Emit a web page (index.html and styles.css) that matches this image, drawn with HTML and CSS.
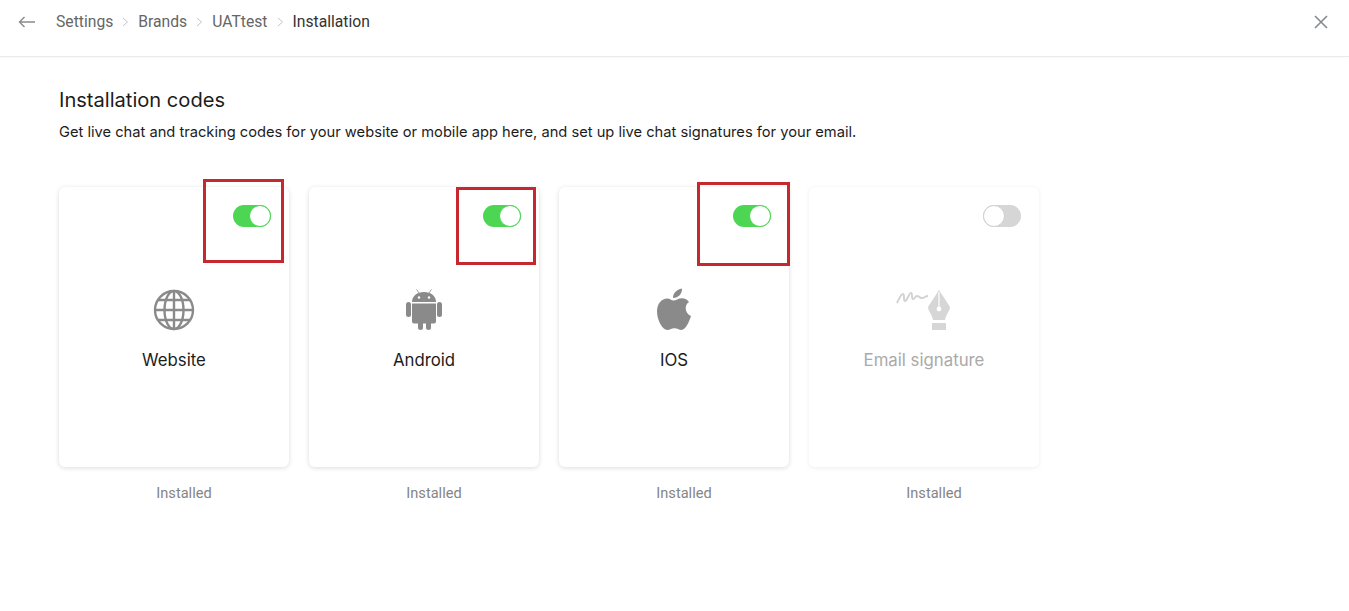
FILE: index.html
```html
<!DOCTYPE html>
<html lang="en">
<head>
    <meta charset="UTF-8">
    <title>Installation</title>
    <link rel="stylesheet" href="styles.css">
</head>
<body>
    <div class="topbar">
        <svg class="back" width="18" height="12" viewBox="0 0 18 12"><path d="M17 6H1.500M6.500 1L1.500 6l5 5" fill="none" stroke="#8a8a8a" stroke-width="1.400"/></svg>
        <div class="crumbs">
            <span>Settings</span>
            <svg class="sep" width="7" height="10" viewBox="0 0 7 10"><path d="M1 1l4.500 4L1 9" fill="none" stroke="#c4c4c4" stroke-width="1"/></svg>
            <span>Brands</span>
            <svg class="sep" width="7" height="10" viewBox="0 0 7 10"><path d="M1 1l4.500 4L1 9" fill="none" stroke="#c4c4c4" stroke-width="1"/></svg>
            <span>UATtest</span>
            <svg class="sep" width="7" height="10" viewBox="0 0 7 10"><path d="M1 1l4.500 4L1 9" fill="none" stroke="#c4c4c4" stroke-width="1"/></svg>
            <span class="current">Installation</span>
        </div>
        <svg class="close" width="14" height="14" viewBox="0 0 14 14"><path d="M1 1l12 12M13 1L1 13" fill="none" stroke="#858a8c" stroke-width="1.600"/></svg>
    </div>

    <div class="content">
        <h1>Installation codes</h1>
        <p class="intro">Get live chat and tracking codes for your website or mobile app here, and set up live chat signatures for your email.</p>

        <div class="platforms">
            <div class="platform">
                <div class="card">
                    <div class="card-top"><span class="toggle on"></span></div>
                    <svg class="icon" width="44" height="44" viewBox="0 0 44 44">
                        <g fill="none" stroke="#8a8a8a" stroke-width="2.400">
                            <circle cx="22" cy="22" r="19"/>
                            <ellipse cx="22" cy="22" rx="9.500" ry="19"/>
                            <path d="M22 3v38M3 22h38M6 12h32M6 32h32"/>
                        </g>
                    </svg>
                    <div class="name">Website</div>
                </div>
                <div class="status">Installed</div>
            </div>

            <div class="platform">
                <div class="card">
                    <div class="card-top"><span class="toggle on"></span></div>
                    <svg class="icon" width="44" height="44" viewBox="0 0 44 44">
                        <g fill="#8a8a8a">
                            <path d="M10 14c0-6 5-10 12-10s12 4 12 10z"/>
                            <path d="M10 15.500h24v18a2 2 0 0 1-2 2H12a2 2 0 0 1-2-2z"/>
                            <rect x="16" y="32" width="5" height="10" rx="2.500"/>
                            <rect x="24" y="32" width="5" height="10" rx="2.500"/>
                            <rect x="4" y="14" width="5" height="15" rx="2.500"/>
                            <rect x="35" y="14" width="5" height="15" rx="2.500"/>
                        </g>
                        <path d="M14.500 1.500l3 4M29.500 1.500l-3 4" stroke="#a0a0a0" stroke-width="1" fill="none"/>
                        <circle cx="17" cy="9.500" r="1.200" fill="#fff"/>
                        <circle cx="27" cy="9.500" r="1.200" fill="#fff"/>
                    </svg>
                    <div class="name">Android</div>
                </div>
                <div class="status">Installed</div>
            </div>

            <div class="platform">
                <div class="card">
                    <div class="card-top"><span class="toggle on"></span></div>
                    <svg class="icon" width="44" height="44" viewBox="0 0 44 44">
                        <g fill="#8a8a8a">
                            <path d="M21.500 12.500c2.500 0 4.500-2.300 8.500-2.300 3 0 5.500 1.400 7 3.700-4.800 3-4.500 11 2 14-1.500 5-5.500 14-9.500 14-3 0-4-1.700-7-1.700s-4.500 1.700-7 1.700C10 41.900 5 31.500 5 23.500c0-8 5-13 10-13 3 0 4.500 2 6.500 2z"/>
                            <path d="M21 10c-.2-4.500 3.500-8.500 9-9.500.3 5-3.500 9.500-9 9.500z"/>
                        </g>
                    </svg>
                    <div class="name">IOS</div>
                </div>
                <div class="status">Installed</div>
            </div>

            <div class="platform disabled">
                <div class="card">
                    <div class="card-top"><span class="toggle"></span></div>
                    <svg class="icon" width="56" height="44" viewBox="0 0 56 44">
                        <path d="M1 15c2-4 4-9 6-9s0 7 2 7 4-8 6-8 0 6 2 6 2-3 4-3 4 3 6 2 3-2 5-2" fill="none" stroke="#d2d2d2" stroke-width="1.900"/>
                        <path d="M43 2l11 17c0 4-4 7-5 13H37c-1-6-5-9-5-13z" fill="#d6d6d6"/>
                        <rect x="36" y="35" width="14" height="7" fill="#d6d6d6"/>
                        <path d="M43 4v15" stroke="#fff" stroke-width="1.200"/>
                        <circle cx="43" cy="21" r="2.400" fill="#fff"/>
                    </svg>
                    <div class="name">Email signature</div>
                </div>
                <div class="status">Installed</div>
            </div>
        </div>
    </div>

    <!-- red boxes drawn over the screenshot -->
    <div class="mark mark-a"></div>
    <div class="mark mark-b"></div>
    <div class="mark mark-c"></div>
</body>
</html>
```

FILE: styles.css
```css
html, body {
    margin: 0;
    padding: 0;
    background: #fff;
}

body {
    font-family: Inter, "Open Sans", sans-serif;
    color: #1c1c1c;
    height: 611px;
    overflow: hidden;
    position: relative;
}

.topbar {
    display: flex;
    align-items: center;
    height: 57px;
    box-sizing: border-box;
    padding: 0 21px 13px 18px;
    border-bottom: 1px solid #ebebeb;
    box-shadow: 0 1px 2px rgba(0, 0, 0, 0.03);
    font-family: Roboto, sans-serif;
    font-size: 15.700px;
    color: #666;
}

.back {
    margin-right: 20px;
}

.crumbs {
    display: flex;
    align-items: center;
    gap: 9px;
}

.current {
    color: #333;
}

.close {
    margin-left: auto;
}

.content {
    padding: 32px 59px 0;
}

h1 {
    margin: 0;
    font-size: 20.100px;
    font-weight: 400;
    line-height: 22px;
}

.intro {
    margin: 10px 0 0;
    font-size: 14.680px;
    line-height: 22px;
}

.platforms {
    display: flex;
    margin-top: 44px;
}

.platform {
    width: 250px;
}

.card {
    width: 230px;
    height: 280px;
    box-sizing: border-box;
    padding: 18px 18px 0;
    border-radius: 6px;
    background: #fff;
    box-shadow: 0 1px 5px rgba(0, 0, 0, 0.14);
    display: flex;
    flex-direction: column;
    align-items: center;
}

.card-top {
    align-self: flex-end;
    height: 22px;
    margin-bottom: 61px;
}

.toggle {
    display: block;
    width: 38px;
    height: 22px;
    box-sizing: border-box;
    border-radius: 11px;
    background: #d6d6d6;
    position: relative;
}

.toggle::after {
    content: "";
    position: absolute;
    top: 0;
    left: 0;
    width: 22px;
    height: 22px;
    box-sizing: border-box;
    border-radius: 50%;
    background: #fff;
    border: 1px solid #d0d0d0;
}

.toggle.on {
    background: #4cd653;
}

.toggle.on::after {
    left: 16px;
    border-color: #4cd653;
}

.icon {
    display: block;
}

.name {
    margin-top: 16px;
    font-size: 16.800px;
    line-height: 24px;
}

.status {
    margin-top: 17px;
    width: 250px;
    text-align: center;
    font-family: Roboto, sans-serif;
    font-size: 14.600px;
    line-height: 18px;
    color: #858585;
}

.disabled .card {
    box-shadow: 0 1px 5px rgba(0, 0, 0, 0.07);
}

.disabled .name {
    color: #aaa;
}

.mark {
    position: absolute;
    box-sizing: border-box;
    border: 3px solid #c5282f;
}

.mark-a {
    left: 203px;
    top: 179px;
    width: 81px;
    height: 84px;
}

.mark-b {
    left: 456px;
    top: 187px;
    width: 80px;
    height: 78px;
}

.mark-c {
    left: 697px;
    top: 182px;
    width: 93px;
    height: 84px;
}
```
